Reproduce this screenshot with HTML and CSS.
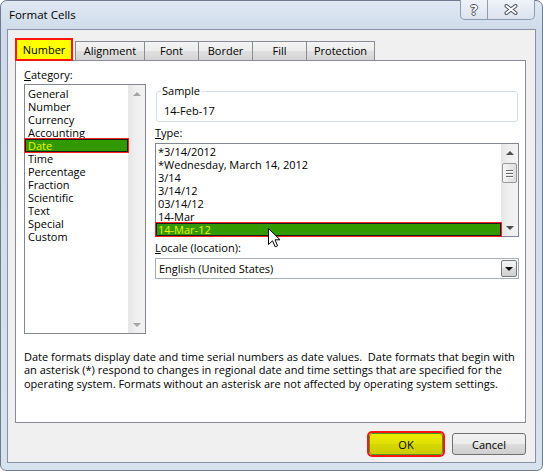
FILE: index.html
```html
<!DOCTYPE html>
<html lang="en">
<head>
  <meta charset="UTF-8">
  <meta name="viewport" content="width=device-width, initial-scale=1">
  <title>Format Cells</title>
  <link rel="stylesheet" href="styles.css">
</head>
<body>
  <div class="window">
    <div class="titlebar">
      <span class="title">Format Cells</span>
      <div class="caption-buttons">
        <span class="cap-btn cap-help">?</span>
        <span class="cap-btn cap-close">
          <svg width="14" height="11" viewBox="0 0 14 11">
            <path d="M2.5 2 L11.5 9 M11.5 2 L2.5 9" stroke="#4d5561" stroke-width="4" stroke-linecap="round"/>
            <path d="M2.5 2 L11.5 9 M11.5 2 L2.5 9" stroke="#fff" stroke-width="2" stroke-linecap="round"/>
          </svg>
        </span>
      </div>
    </div>

    <div class="client">
      <div class="tabs">
        <span class="tab tab-active">Number</span>
        <span class="tab tab-alignment">Alignment</span>
        <span class="tab tab-font">Font</span>
        <span class="tab tab-border">Border</span>
        <span class="tab tab-fill">Fill</span>
        <span class="tab tab-protection">Protection</span>
      </div>

      <div class="panel">
        <div class="columns">
          <div class="col-left">
            <div class="label"><u>C</u>ategory:</div>
            <div class="listbox category-list">
              <ul class="items">
                <li>General</li>
                <li>Number</li>
                <li>Currency</li>
                <li>Accounting</li>
                <li class="selected">Date</li>
                <li>Time</li>
                <li>Percentage</li>
                <li>Fraction</li>
                <li>Scientific</li>
                <li>Text</li>
                <li>Special</li>
                <li>Custom</li>
              </ul>
              <div class="scrollbar disabled">
                <span class="sb-btn"><i class="arrow-up"></i></span>
                <span class="sb-track"></span>
                <span class="sb-btn"><i class="arrow-down"></i></span>
              </div>
            </div>
          </div>

          <div class="col-right">
            <fieldset class="sample">
              <legend>Sample</legend>
              <div class="sample-value">14-Feb-17</div>
            </fieldset>

            <div class="label label-type"><u>T</u>ype:</div>
            <div class="listbox type-list">
              <ul class="items">
                <li>*3/14/2012</li>
                <li>*Wednesday, March 14, 2012</li>
                <li>3/14</li>
                <li>3/14/12</li>
                <li>03/14/12</li>
                <li>14-Mar</li>
                <li class="selected">14-Mar-12</li>
              </ul>
              <div class="scrollbar">
                <span class="sb-btn"><i class="arrow-up"></i></span>
                <span class="sb-track">
                  <span class="sb-thumb"><i></i><i></i><i></i></span>
                </span>
                <span class="sb-btn"><i class="arrow-down"></i></span>
              </div>
            </div>

            <div class="label label-locale"><u>L</u>ocale (location):</div>
            <div class="select">
              <span class="select-text">English (United States)</span>
              <span class="select-btn"><i class="arrow-down"></i></span>
            </div>
          </div>
        </div>

        <p class="description">
          Date formats display date and time serial numbers as date values.&nbsp; Date formats that begin with<br>
          an asterisk (*) respond to changes in regional date and time settings that are specified for the<br>
          operating system. Formats without an asterisk are not affected by operating system settings.
        </p>
      </div>

      <div class="buttons">
        <button type="button" class="btn btn-ok">OK</button>
        <button type="button" class="btn">Cancel</button>
      </div>
    </div>
  </div>

  <!-- mouse pointer resting on the selected type -->
  <svg class="cursor" width="13" height="20" viewBox="0 0 13 20">
    <path d="M0.5 0.5 L0.5 16.5 L4.5 12.8 L7.2 18.8 L9.6 17.8 L7 11.8 L12 11.8 Z" fill="#fff" stroke="#000" stroke-width="1" stroke-linejoin="miter"/>
  </svg>
</body>
</html>
```

FILE: styles.css
```css
* {
  margin: 0;
  padding: 0;
  box-sizing: border-box;
}

body {
  font-family: "Open Sans", "Noto Sans", sans-serif;
  font-size: 11px;
  color: #000;
  background: #fff;
  width: 543px;
  height: 471px;
  overflow: hidden;
  position: relative;
}

/* window frame */
.window {
  width: 543px;
  height: 471px;
  border: 1px solid #6d7b8c;
  border-radius: 7px 7px 6px 6px;
  background: linear-gradient(to bottom, #dfe8f3, #cfdbea 30px, #d7e2ef);
  padding: 0 6px 7px;
  display: flex;
  flex-direction: column;
}

.titlebar {
  height: 28px;
  display: flex;
  align-items: flex-start;
}

.title {
  padding: 6px 0 0 2px;
  line-height: 16px;
  font-size: 11.5px;
}

.caption-buttons {
  margin-left: auto;
  margin-right: 1px;
  margin-top: -1px;
  display: flex;
}

.cap-btn {
  height: 20px;
  border: 1px solid #8e9cb0;
  border-top: none;
  background: linear-gradient(to bottom, #eef3f9, #dae3ee);
  display: flex;
  align-items: center;
  justify-content: center;
}

.cap-help {
  width: 28px;
  border-radius: 0 0 0 5px;
  font-weight: bold;
  font-size: 14px;
  line-height: 14px;
  color: #fff;
  text-shadow: 1px 0 #4d5561, -1px 0 #4d5561, 0 1px #4d5561, 0 -1px #4d5561;
}

.cap-close {
  width: 47px;
  border-left: none;
  border-radius: 0 0 5px 0;
}

/* dialog body */
.client {
  flex: 1;
  background: #f0f0f0;
  border: 1px solid #8593a5;
  padding: 8px 9px 0 7px;
  display: flex;
  flex-direction: column;
}

.tabs {
  height: 22px;
  display: flex;
  align-items: flex-end;
}

.tab {
  height: 19px;
  border: 1px solid #898c95;
  border-bottom: none;
  background: linear-gradient(to bottom, #f4f4f4, #ececec 50%, #e0e0e0 50%, #d4d4d4);
  line-height: 18px;
  text-align: center;
  margin-left: -1px;
}

.tab-active {
  position: relative;
  z-index: 2;
  width: 58px;
  height: 23px;
  margin-left: 0;
  margin-bottom: -1px;
  border: 2px solid #ff1414;
  background: #ffff00;
  line-height: 19px;
}

.tab-alignment { width: 70px; margin-left: 2px; }
.tab-font { width: 55px; }
.tab-border { width: 55px; }
.tab-fill { width: 55px; }
.tab-protection { width: 69px; }

.panel {
  height: 363px;
  border: 1px solid #898c95;
  background: #fff;
  padding: 7px 6px 0 8px;
}

.columns {
  display: grid;
  grid-template-columns: 122px 364px;
  column-gap: 9px;
}

.label {
  line-height: 14px;
}

.col-right {
  padding-top: 16px;
}

/* list boxes */
.listbox {
  border: 1px solid #828790;
  background: #fff;
  display: flex;
}

.category-list {
  margin-top: 2px;
  height: 250px;
}

.type-list {
  margin-top: 3px;
  height: 94px;
}

.items {
  list-style: none;
  flex: 1;
}

.category-list .items {
  padding-top: 2px;
}

.type-list .items {
  padding-top: 1px;
}

.items li {
  height: 13px;
  line-height: 13px;
  padding-left: 3px;
  white-space: nowrap;
}

.type-list .items li {
  padding-left: 2px;
}

.items li.selected {
  position: relative;
  background: #339900;
  color: #e8f500;
  outline: 1px solid #ff2020;
  box-shadow: inset -1px -1px 0 #1c1c1c, inset 1px 1px 0 #1c1c1c;
}

.scrollbar {
  width: 17px;
  display: flex;
  flex-direction: column;
  background: linear-gradient(to right, #e6e6e6, #efefef 40%, #f2f2f2);
  border-left: 1px solid #e8e8e8;
}

.sb-btn {
  height: 17px;
  display: flex;
  align-items: center;
  justify-content: center;
}

.sb-track {
  flex: 1;
  padding: 2px 1px 0 0;
}

.sb-thumb {
  display: flex;
  flex-direction: column;
  align-items: center;
  justify-content: center;
  gap: 2px;
  height: 20px;
  border: 1px solid #979797;
  border-radius: 2px;
  background: linear-gradient(to right, #f6f6f6, #e9e9e9 50%, #dcdcdc);
}

.sb-thumb i {
  width: 7px;
  height: 1px;
  background: #6e6e6e;
  box-shadow: 0 1px 0 #fff;
}

.arrow-up,
.arrow-down {
  width: 0;
  height: 0;
  border-left: 4px solid transparent;
  border-right: 4px solid transparent;
}

.arrow-up {
  border-bottom: 4px solid #4f4f4f;
}

.arrow-down {
  border-top: 4px solid #4f4f4f;
}

.disabled .arrow-up {
  border-bottom-color: #a3a3a3;
}

.disabled .arrow-down {
  border-top-color: #a3a3a3;
}

/* sample group box */
.sample {
  border: 1px solid #d5dfe5;
  border-radius: 3px;
  padding: 0 4px 3px;
  margin: 0 1px;
}

.sample legend {
  padding: 0 1px;
  line-height: 14px;
}

.sample-value {
  padding-left: 3px;
  margin-top: 6px;
  line-height: 14px;
}

.label-type,
.label-locale {
  margin-top: 4px;
}

/* locale drop-down */
.select {
  margin-top: 3px;
  height: 21px;
  border: 1px solid #a7adb5;
  display: flex;
  align-items: stretch;
}

.select-text {
  flex: 1;
  padding-left: 3px;
  line-height: 19px;
}

.select-btn {
  width: 16px;
  margin: 1px 1px 1px 0;
  border: 1px solid #7a7a7a;
  border-radius: 2px;
  background: linear-gradient(to bottom, #f4f4f4, #ebebeb 50%, #dddddd 50%, #d0d0d0);
  display: flex;
  align-items: center;
  justify-content: center;
}

.select-btn .arrow-down {
  border-top-color: #111;
}

.description {
  margin-top: 16px;
  line-height: 13.3px;
  white-space: nowrap;
}

/* OK / Cancel */
.buttons {
  margin-top: 10px;
  display: flex;
  justify-content: flex-end;
  gap: 9px;
}

.btn {
  width: 74px;
  height: 22px;
  font-family: inherit;
  font-size: 11px;
  color: #000;
  border: 1px solid #707070;
  border-radius: 3px;
  background: linear-gradient(to bottom, #f2f2f2, #ebebeb 50%, #dddddd 50%, #cfcfcf);
}

.btn-ok {
  border-color: #4f9a1c;
  background: linear-gradient(to bottom, #eaea00, #e0e000 50%, #d6d600 50%, #cccc00);
  outline: 2px solid #ff1414;
}

.cursor {
  position: absolute;
  left: 268px;
  top: 228px;
}
```
